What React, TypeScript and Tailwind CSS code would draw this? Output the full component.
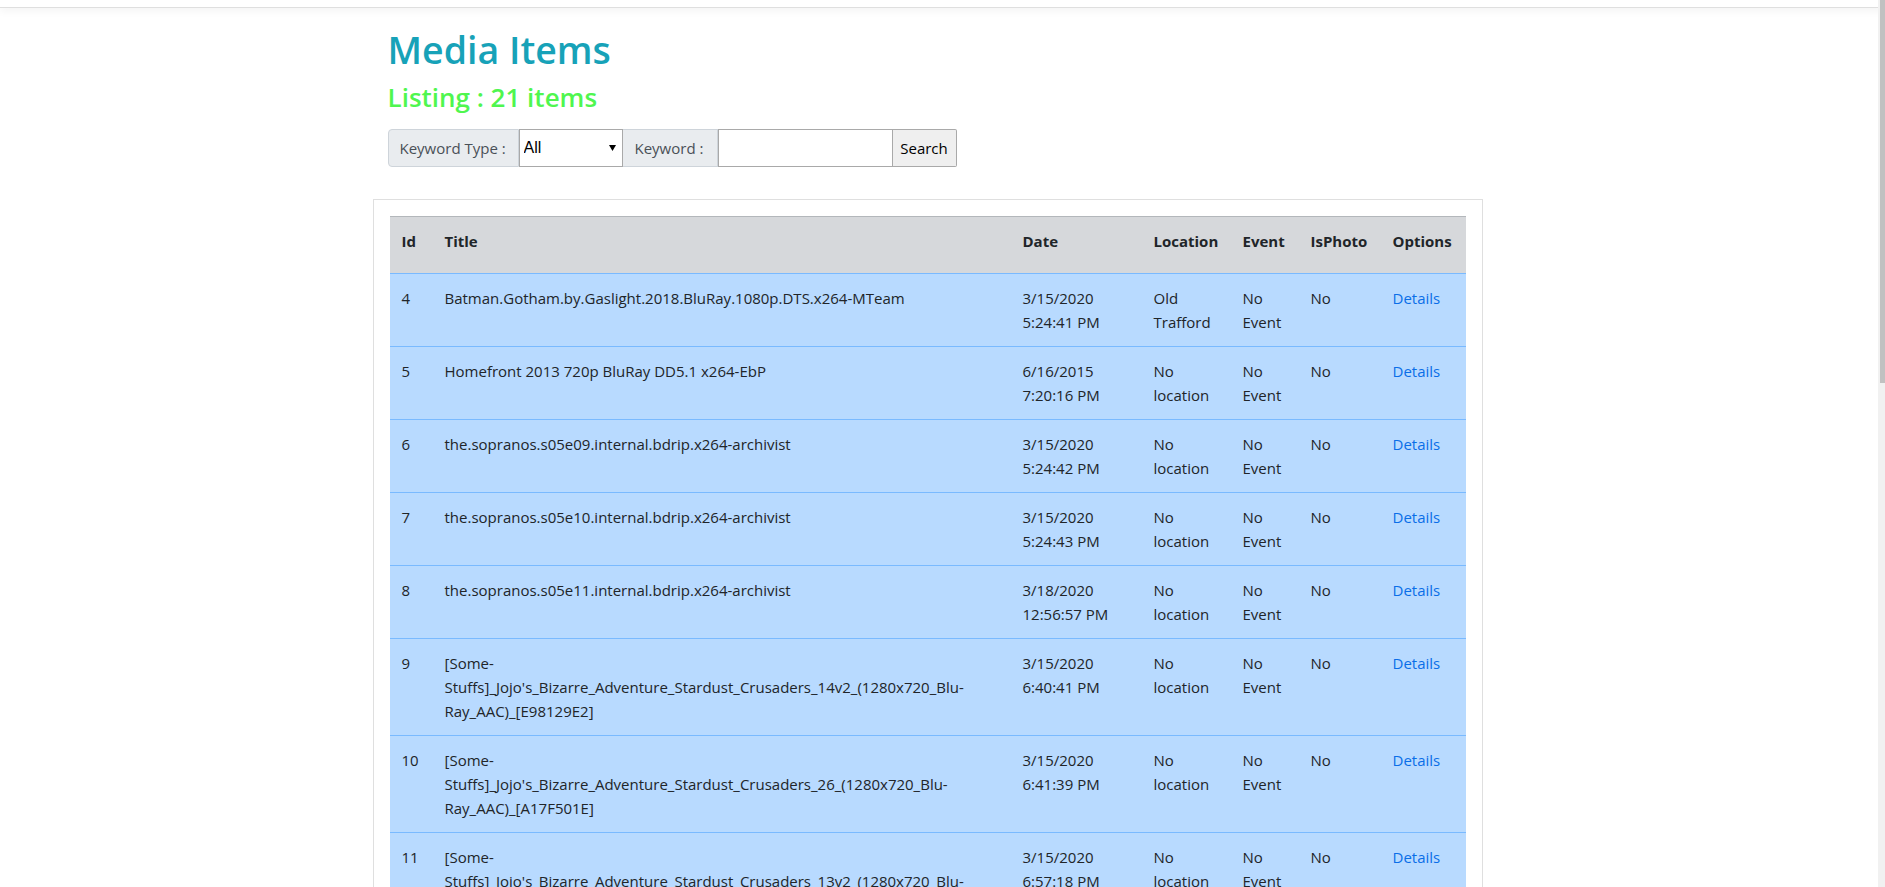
import React from "react";

type MediaItem = {
  id: number;
  title: string;
  date: string;
  location: string;
  event: string;
  isPhoto: string;
};

const items: MediaItem[] = [
  { id: 4, title: "Batman.Gotham.by.Gaslight.2018.BluRay.1080p.DTS.x264-MTeam", date: "3/15/2020 5:24:41 PM", location: "Old Trafford", event: "No Event", isPhoto: "No" },
  { id: 5, title: "Homefront 2013 720p BluRay DD5.1 x264-EbP", date: "6/16/2015 7:20:16 PM", location: "No location", event: "No Event", isPhoto: "No" },
  { id: 6, title: "the.sopranos.s05e09.internal.bdrip.x264-archivist", date: "3/15/2020 5:24:42 PM", location: "No location", event: "No Event", isPhoto: "No" },
  { id: 7, title: "the.sopranos.s05e10.internal.bdrip.x264-archivist", date: "3/15/2020 5:24:43 PM", location: "No location", event: "No Event", isPhoto: "No" },
  { id: 8, title: "the.sopranos.s05e11.internal.bdrip.x264-archivist", date: "3/18/2020 12:56:57 PM", location: "No location", event: "No Event", isPhoto: "No" },
  { id: 9, title: "[Some-Stuffs]_Jojo's_Bizarre_Adventure_Stardust_Crusaders_14v2_(1280x720_Blu-Ray_AAC)_[E98129E2]", date: "3/15/2020 6:40:41 PM", location: "No location", event: "No Event", isPhoto: "No" },
  { id: 10, title: "[Some-Stuffs]_Jojo's_Bizarre_Adventure_Stardust_Crusaders_26_(1280x720_Blu-Ray_AAC)_[A17F501E]", date: "3/15/2020 6:41:39 PM", location: "No location", event: "No Event", isPhoto: "No" },
  { id: 11, title: "[Some-Stuffs]_Jojo's_Bizarre_Adventure_Stardust_Crusaders_13v2_(1280x720_Blu-Ray_AAC)_[5C2B91D4]", date: "3/15/2020 6:57:18 PM", location: "No location", event: "No Event", isPhoto: "No" },
  { id: 12, title: "[Some-Stuffs]_Jojo's_Bizarre_Adventure_Stardust_Crusaders_15v2_(1280x720_Blu-Ray_AAC)_[0D4E7A19]", date: "3/15/2020 6:58:02 PM", location: "No location", event: "No Event", isPhoto: "No" },
];

// larguras medidas das colunas (table-fixed)
const colunas = [
  { label: "Id", w: "w-[43px]" },
  { label: "Title", w: "w-[578px]" },
  { label: "Date", w: "w-[131px]" },
  { label: "Location", w: "w-[89px]" },
  { label: "Event", w: "w-[68px]" },
  { label: "IsPhoto", w: "w-[82px]" },
  { label: "Options", w: "w-[85px]" },
];

const td = "border-t border-[#7abaff] bg-[#b8daff] px-3 py-3 align-top leading-6";

export default function App() {
  return (
    <div className="relative h-[887px] overflow-hidden bg-white font-['Open_Sans',Roboto,sans-serif] text-[#212529]">
      {/* navbar cortada no topo */}
      <div className="h-[8px] border-b border-[#dfdfdf] bg-white shadow-[0_3px_8px_rgba(0,0,0,0.05)]" />

      <div className="mx-auto w-[1140px]">
        <div className="px-[15px] pt-[19px]">
          <h1 className="mb-[10px] text-[37.5px] font-semibold leading-[45px] text-[#17a2b8]">Media Items</h1>
          <h3 className="mb-[16px] text-[26px] font-semibold leading-[31px] text-[#4ff64f]">Listing : 21 items</h3>

          <div className="flex h-[38px] items-stretch text-[15px]">
            <span className="flex w-[131px] items-center whitespace-nowrap rounded-l-[4px] border border-[#ced4da] bg-[#e9ecef] px-[11px] text-[#495057]">
              Keyword Type :
            </span>
            <div className="relative w-[104px]">
              <select className="h-full w-full appearance-none border border-[#a9a9a9] bg-white pl-[4px] font-['Liberation_Sans',Arial,sans-serif] text-[16px] text-black outline-none">
                <option>All</option>
                <option>Title</option>
                <option>Location</option>
                <option>Event</option>
              </select>
              <svg className="pointer-events-none absolute right-[7px] top-[16px]" width="7" height="6" viewBox="0 0 7 6">
                <path d="M0 0h7L3.5 6z" fill="#000" />
              </svg>
            </div>
            <span className="flex w-[95px] items-center whitespace-nowrap border border-l-0 border-[#ced4da] bg-[#e9ecef] px-3 text-[#495057]">
              Keyword :
            </span>
            <input className="w-[175px] border border-[#a9a9a9] bg-white px-2 outline-none" />
            <button className="w-[64px] rounded-r-[2px] border border-l-0 border-[#a9a9a9] bg-[#efefef] text-black">
              Search
            </button>
          </div>
        </div>

        <div className="mt-[32px] w-[1110px] border border-[#dfdfdf] bg-white p-4">
          <table className="w-[1076px] table-fixed border-separate border-spacing-0 text-[15px]">
            <colgroup>
              {colunas.map((c) => (
                <col key={c.label} className={c.w} />
              ))}
            </colgroup>
            <thead>
              <tr>
                {colunas.map((c) => (
                  <th
                    key={c.label}
                    className="whitespace-nowrap border-t border-[#b3b7bb] bg-[#d6d8db] px-3 pb-5 pt-3 text-left align-top font-bold leading-6"
                  >
                    {c.label}
                  </th>
                ))}
              </tr>
            </thead>
            <tbody>
              {items.map((it) => (
                <tr key={it.id}>
                  <td className={td}>{it.id}</td>
                  <td className={`${td} pr-[18px]`}>{it.title}</td>
                  <td className={td}>{it.date}</td>
                  <td className={td}>{it.location}</td>
                  <td className={td}>{it.event}</td>
                  <td className={td}>{it.isPhoto}</td>
                  <td className={td}>
                    <a href="#" className="text-[#0a6ee8]">Details</a>
                  </td>
                </tr>
              ))}
            </tbody>
          </table>
        </div>
      </div>

      {/* barra de rolagem do navegador, cortada na captura */}
      <div className="absolute right-0 top-0 h-full w-[7px] bg-[#f1f1f1]">
        <div className="ml-[2px] h-[383px] w-[5px] bg-[#c1c1c1]" />
      </div>
    </div>
  );
}
